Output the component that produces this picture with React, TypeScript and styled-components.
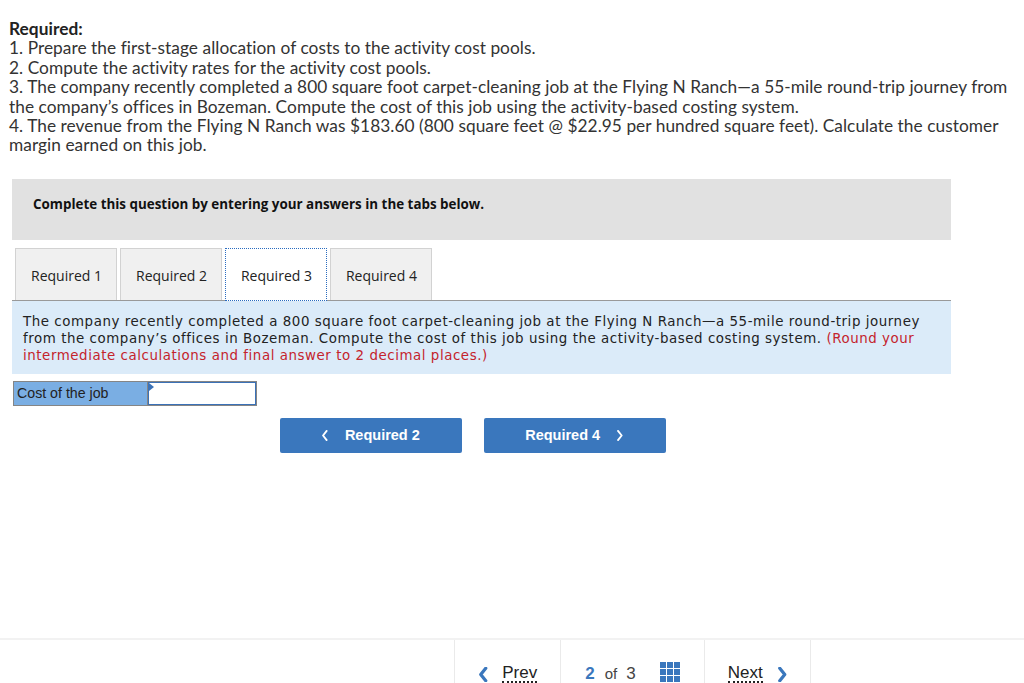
import React from "react";
import styled, { createGlobalStyle } from "styled-components";

const GlobalStyle = createGlobalStyle`
  html, body {
    margin: 0;
    padding: 0;
    background: #fff;
  }
  body {
    font-family: "Lato", "Liberation Sans", sans-serif;
    color: #333;
  }
`;

const Page = styled.div`
  width: 1024px;
  height: 683px;
  display: flex;
  flex-direction: column;
  overflow: hidden;
`;

const Intro = styled.div`
  padding: 19px 3px 0 9px;
  font-family: "Lato", "Liberation Sans", sans-serif;
  font-size: 17.3px;
  letter-spacing: 0.05px;
  line-height: 19.4px;
  color: #333;
  p {
    margin: 0;
  }
  strong {
    font-weight: 700;
    color: #222;
  }
`;

const Question = styled.div`
  margin: 24px 0 0 12px;
  width: 939px;
`;

const Banner = styled.div`
  box-sizing: border-box;
  height: 61px;
  background: #e1e1e1;
  padding: 16px 0 0 21px;
  font-family: "Open Sans", sans-serif;
  font-weight: 700;
  font-size: 13.4px;
  color: #111;
`;

const TabRow = styled.div`
  display: flex;
  gap: 3px;
  margin-top: 8px;
  padding-left: 3px;
  border-bottom: 1px solid #999;
  height: 52px;
  align-items: flex-end;
`;

const Tab = styled.div<{ $active?: boolean }>`
  box-sizing: border-box;
  height: ${(p) => (p.$active ? "53px" : "52px")};
  margin-bottom: ${(p) => (p.$active ? "-1px" : "0")};
  padding: 3px 14px 0 15px;
  display: flex;
  align-items: center;
  font-family: "Open Sans", sans-serif;
  font-size: 14px;
  color: #222;
  background: ${(p) => (p.$active ? "#fff" : "#f0f0f0")};
  border: ${(p) => (p.$active ? "1px dotted #2a6cc0" : "1px solid #d2d2d2")};
  border-bottom: ${(p) => (p.$active ? "1px dotted #2a6cc0" : "none")};
`;

const Prompt = styled.div`
  background: #dbebf9;
  padding: 12px 11px 10px;
  font-family: "DejaVu Sans", "Bitstream Vera Sans", Verdana, sans-serif;
  font-size: 13.4px;
  letter-spacing: 0.55px;
  line-height: 17px;
  color: #222;
`;

const Hint = styled.span`
  color: #c4232c;
`;

const AnswerRow = styled.div`
  display: flex;
  margin: 7px 0 0 1px;
  height: 25px;
`;

const AnswerLabel = styled.div`
  box-sizing: border-box;
  width: 134px;
  background: #7aaee3;
  border: 1px solid #858585;
  border-right: none;
  display: flex;
  align-items: center;
  padding-left: 3px;
  font-family: "Liberation Sans", Arial, sans-serif;
  font-size: 14.2px;
  color: #222;
`;

const AnswerInput = styled.div`
  position: relative;
  box-sizing: border-box;
  width: 110px;
  background: #fff;
  border: 1px solid #858585;
  box-shadow: inset 0 0 0 1px #3b72b8;
  &::before {
    content: "";
    position: absolute;
    top: 1px;
    left: 1px;
    border-top: 4px solid transparent;
    border-bottom: 4px solid transparent;
    border-left: 5px solid #3b72b8;
  }
`;

const NavRow = styled.div`
  display: flex;
  justify-content: center;
  gap: 22px;
  margin-top: 12px;
  padding-right: 18px;
`;

const NavButton = styled.button`
  width: 182px;
  height: 35px;
  border: none;
  border-radius: 2px;
  background: #3a77bd;
  color: #fff;
  font-family: "Liberation Sans", Arial, sans-serif;
  font-weight: 700;
  font-size: 14.5px;
  display: flex;
  align-items: center;
  justify-content: center;
  gap: 16px;
  cursor: pointer;
`;

const Footer = styled.div`
  margin-top: auto;
  height: 43px;
  border-top: 2px solid #f2f2f2;
  display: flex;
  justify-content: flex-start;
  padding-left: 454px;
`;

const FooterCell = styled.div<{ $w: number; $gap?: number }>`
  box-sizing: border-box;
  width: ${(p) => p.$w}px;
  border-left: 1px solid #eaeaea;
  display: flex;
  align-items: flex-end;
  justify-content: center;
  gap: ${(p) => p.$gap ?? 14}px;
  padding-top: 19px;
  font-family: "Liberation Sans", Arial, sans-serif;
  font-size: 17px;
  color: #333;
  &:last-child {
    border-right: 1px solid #eaeaea;
  }
`;

const FooterLink = styled.span`
  border-bottom: 2px dotted #222;
  line-height: 17px;
  color: #222;
`;

const PageCount = styled.span`
  color: #444;
  line-height: 19px;
  b {
    color: #3a77bd;
    font-weight: 700;
    margin-right: 10px;
  }
  i {
    font-style: normal;
    font-size: 15px;
    margin-right: 9px;
  }
`;

const Chevron = ({ dir, size = 12, stroke = 2 }: { dir: "left" | "right"; size?: number; stroke?: number }) => (
  <svg width={size * 0.7} height={size} viewBox="0 0 7 12" fill="none">
    <path
      d={dir === "left" ? "M5.5 1 L1.5 6 L5.5 11" : "M1.5 1 L5.5 6 L1.5 11"}
      stroke="currentColor"
      strokeWidth={stroke}
      strokeLinecap="round"
      strokeLinejoin="round"
    />
  </svg>
);

const GridIcon = () => (
  <svg width="20" height="20" viewBox="0 0 20 20" fill="#3a77bd">
    {[0, 7, 14].map((y) =>
      [0, 7, 14].map((x) => <rect key={`${x}-${y}`} x={x} y={y} width="6" height="6" />)
    )}
  </svg>
);

const BlueIcon = styled.span`
  color: #3a77bd;
  display: flex;
  align-items: center;
  padding-bottom: 1px;
`;

export default function App() {
  return (
    <Page>
      <GlobalStyle />
      <Intro>
        <p>
          <strong>Required:</strong>
        </p>
        <p>1. Prepare the first-stage allocation of costs to the activity cost pools.</p>
        <p>2. Compute the activity rates for the activity cost pools.</p>
        <p>
          3. The company recently completed a 800 square foot carpet-cleaning job at the Flying N Ranch—a 55-mile
          round-trip journey from the company’s offices in Bozeman. Compute the cost of this job using the
          activity-based costing system.
        </p>
        <p>
          4. The revenue from the Flying N Ranch was $183.60 (800 square feet @ $22.95 per hundred square feet).
          Calculate the customer margin earned on this job.
        </p>
      </Intro>

      <Question>
        <Banner>Complete this question by entering your answers in the tabs below.</Banner>
        <TabRow>
          <Tab>Required 1</Tab>
          <Tab>Required 2</Tab>
          <Tab $active>Required 3</Tab>
          <Tab>Required 4</Tab>
        </TabRow>
        <Prompt>
          The company recently completed a 800 square foot carpet-cleaning job at the Flying N Ranch—a 55-mile
          round-trip journey from the company’s offices in Bozeman. Compute the cost of this job using the
          activity-based costing system.{" "}
          <Hint>(Round your intermediate calculations and final answer to 2 decimal places.)</Hint>
        </Prompt>
        <AnswerRow>
          <AnswerLabel>Cost of the job</AnswerLabel>
          <AnswerInput />
        </AnswerRow>
        <NavRow>
          <NavButton>
            <Chevron dir="left" size={11} />
            Required 2
          </NavButton>
          <NavButton>
            Required 4
            <Chevron dir="right" size={11} />
          </NavButton>
        </NavRow>
      </Question>

      <Footer>
        <FooterCell $w={106}>
          <BlueIcon>
            <Chevron dir="left" size={15} stroke={2.6} />
          </BlueIcon>
          <FooterLink>Prev</FooterLink>
        </FooterCell>
        <FooterCell $w={144} $gap={24}>
          <PageCount>
            <b>2</b>
            <i>of</i>3
          </PageCount>
          <BlueIcon>
            <GridIcon />
          </BlueIcon>
        </FooterCell>
        <FooterCell $w={107}>
          <FooterLink>Next</FooterLink>
          <BlueIcon>
            <Chevron dir="right" size={15} stroke={2.6} />
          </BlueIcon>
        </FooterCell>
      </Footer>
    </Page>
  );
}
